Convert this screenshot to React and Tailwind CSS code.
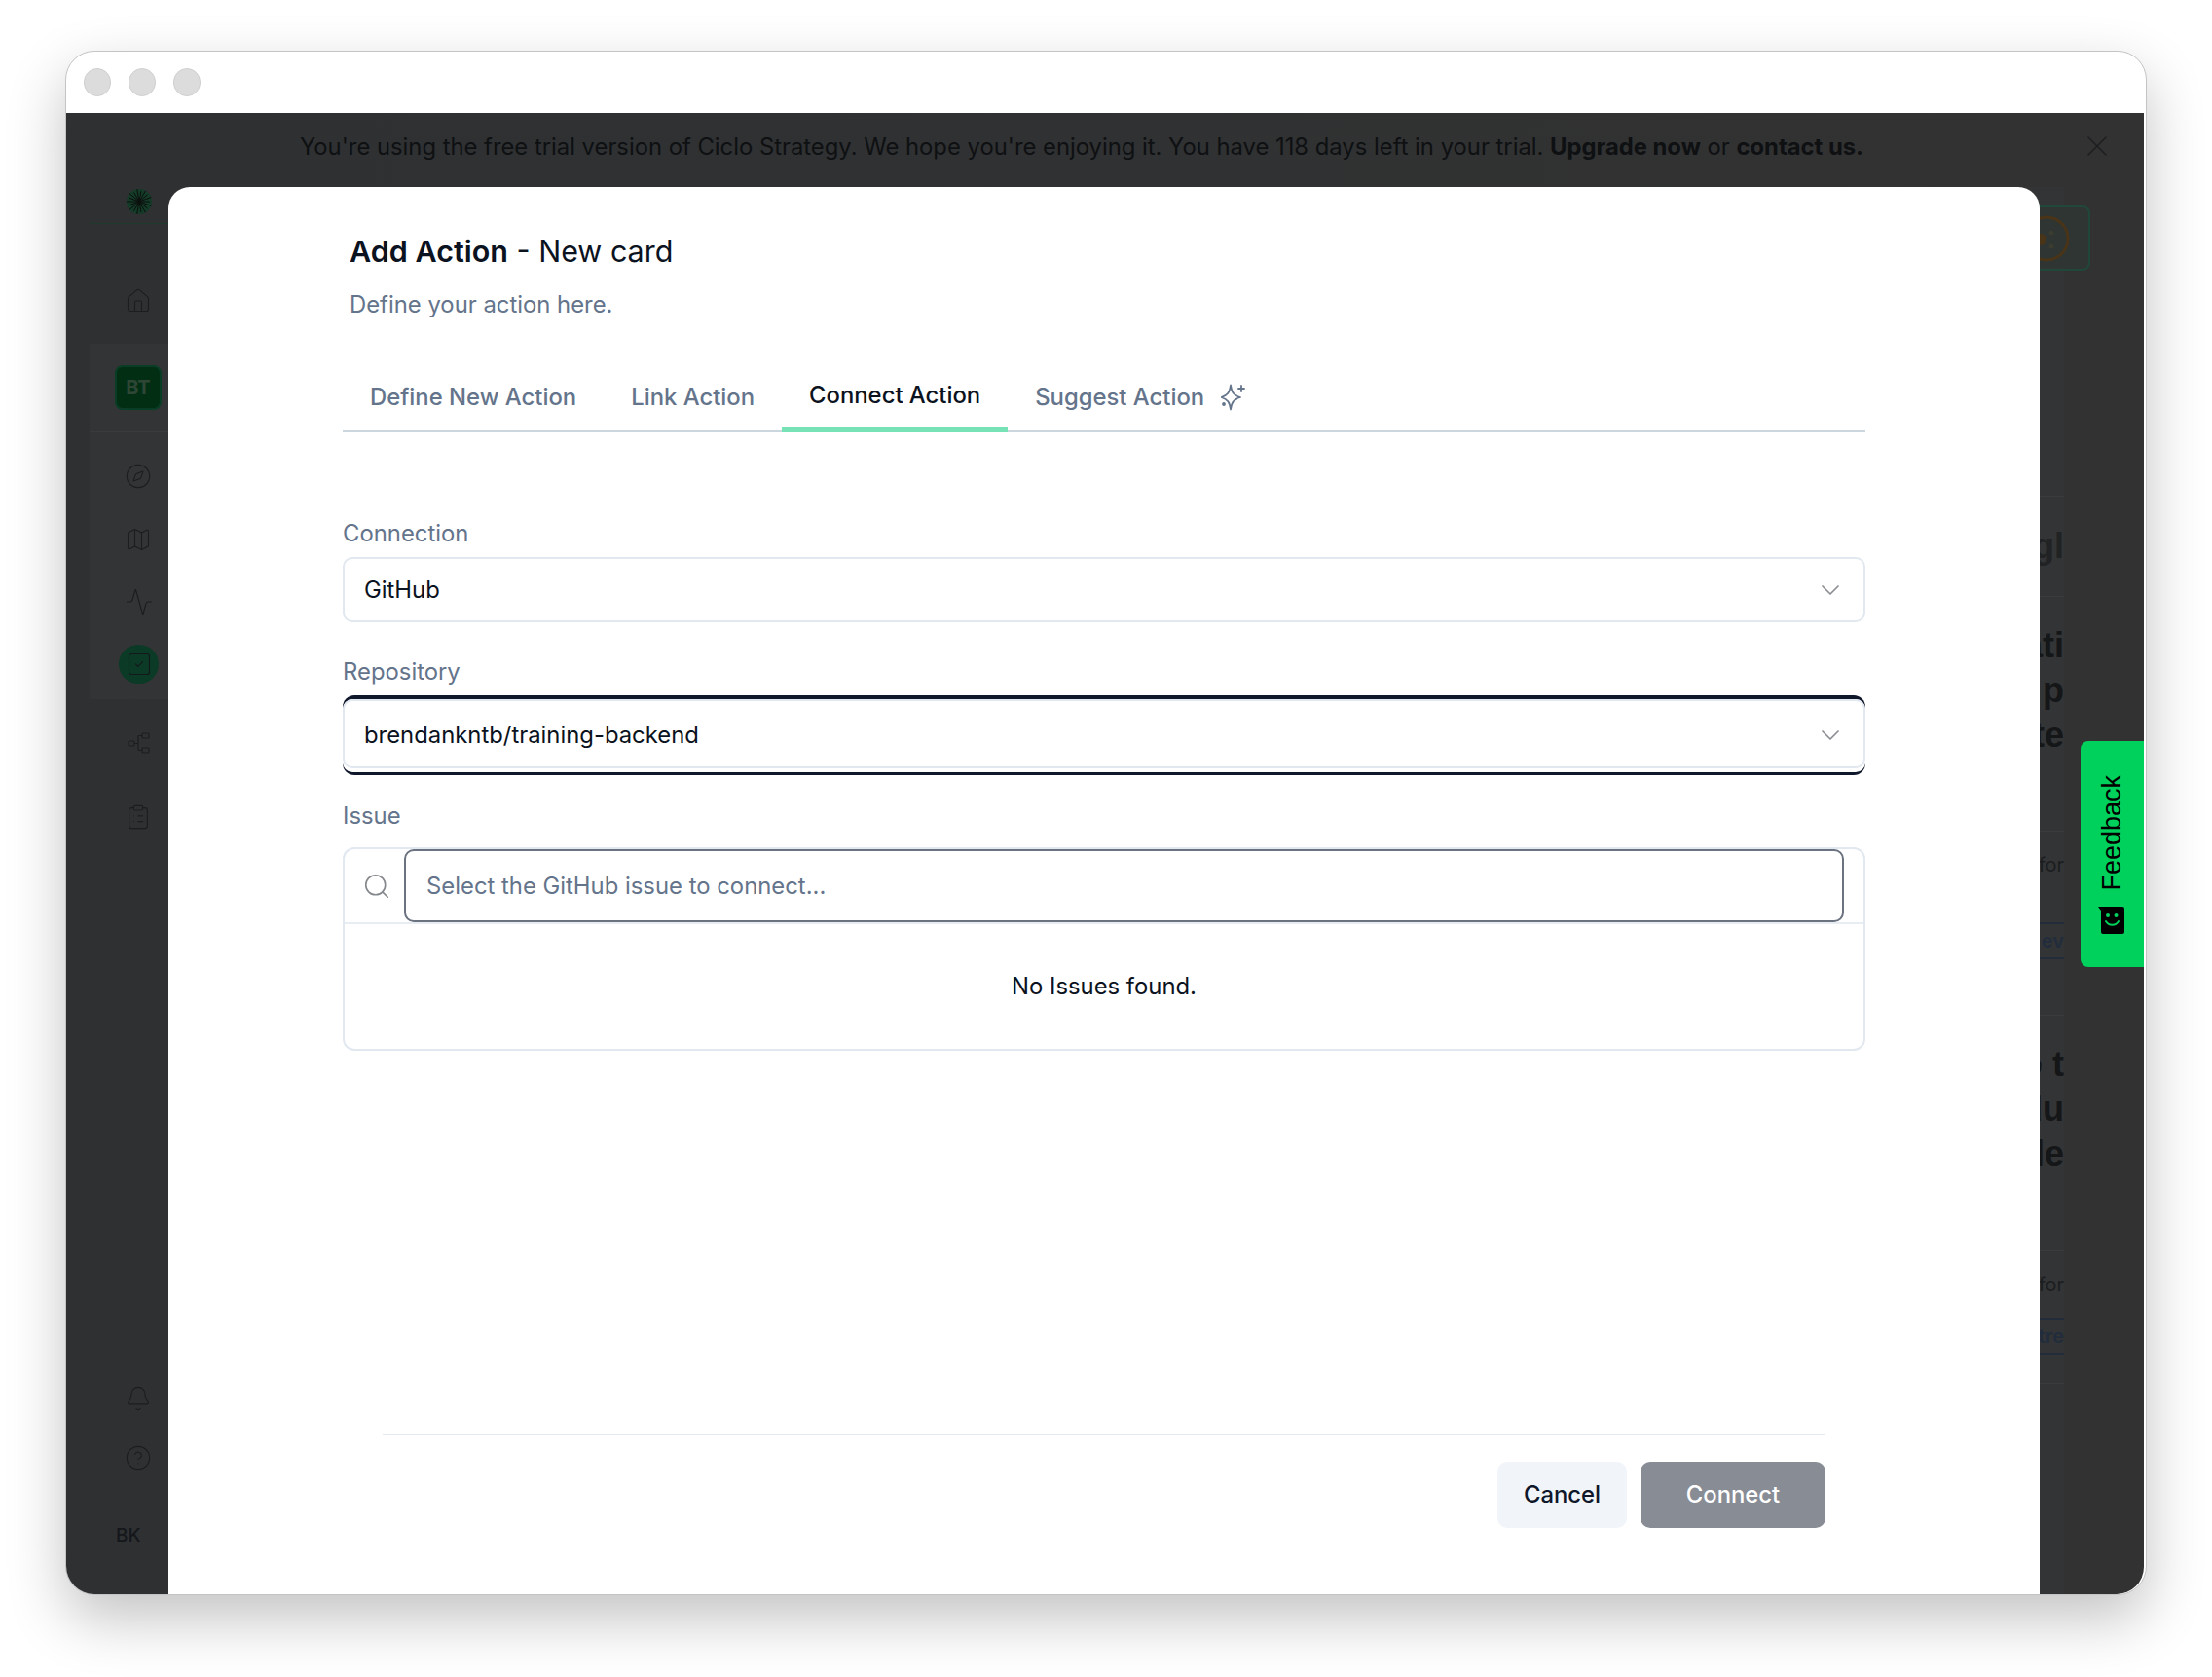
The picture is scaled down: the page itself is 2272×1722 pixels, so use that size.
import React from "react";
import { House, Compass, Map, Activity, SquareCheck, ClipboardList, Bell, CircleHelp, X, Search, ChevronDown } from "lucide-react";

function SparkIcon() {
  return (
    <svg width="28" height="28" viewBox="0 0 28 28" fill="none" stroke="#64748b" strokeWidth="1.8" strokeLinejoin="round" strokeLinecap="round">
      <path d="M10 1.5C11 9 13 12 20 14C13 16 11 19 10 26.5C9 19 7 16 0.5 14C7 12 9 9 10 1.5Z" />
      <path d="M21 2v6M18 5h6" />
      <circle cx="3" cy="21" r="1" fill="#64748b" />
    </svg>
  );
}

function Burst() {
  const spokes = Array.from({ length: 18 }, (_, i) => (i * Math.PI) / 9);
  return (
    <svg width="28" height="28" viewBox="-14 -14 28 28">
      <circle r="13" fill="#143a28" />
      {spokes.map((a, i) => (
        <line key={i} x1="0" y1="0" x2={Math.cos(a) * (i % 2 ? 13 : 11)} y2={Math.sin(a) * (i % 2 ? 13 : 11)} stroke="#0b0f0d" strokeWidth="1" />
      ))}
    </svg>
  );
}

function TreeIcon() {
  return (
    <svg width="24" height="24" viewBox="0 0 24 24" fill="none" stroke="#1b1d1f" strokeWidth="1.1">
      <rect x="1" y="10" width="6" height="5" rx="1" />
      <rect x="15" y="2" width="7" height="5" rx="1" />
      <rect x="15" y="17" width="7" height="5" rx="1" />
      <path d="M7 12.5h4M11 4.5v15M11 4.5h4M11 19.5h4" />
    </svg>
  );
}

function SmileBubble() {
  return (
    <svg width="27" height="28" viewBox="0 0 27 28">
      <path d="M0 0H25a2 2 0 0 1 2 2V26a2 2 0 0 1-2 2H5a2 2 0 0 1-2-2V4Z" fill="#000" />
      <circle cx="10" cy="9" r="2" fill="#00d05c" />
      <circle cx="18.5" cy="9" r="2" fill="#00d05c" />
      <path d="M8 15c3 5 10 5 13 0" fill="none" stroke="#00d05c" strokeWidth="2" strokeLinecap="round" />
    </svg>
  );
}

function Field({ label, children, className = "" }) {
  return (
    <div className={className}>
      <div className="text-[23.85px] leading-[32px] text-[#64748b]">{label}</div>
      {children}
    </div>
  );
}

function Select({ value, className }) {
  return (
    <div className={`flex items-center justify-between rounded-[10px] border-2 border-[#e2e8f0] bg-white pl-[20px] pr-[18px] text-[23.85px] text-[#0b1220] ${className}`}>
      <span>{value}</span>
      <ChevronDown size={32} strokeWidth={1.3} color="#8a8d92" />
    </div>
  );
}

function Peek({ lines, topPad, bottomPad, subTop, pillGap, pill, subPad }) {
  return (
    <div className="border-b border-[#3a3b3c]">
      <div className={`flex flex-col items-end ${topPad} ${bottomPad}`}>
        {lines.map((t) => (
          <div key={t} className="h-[46px] text-[36px] leading-[46px] font-bold text-[#141618] font-['Liberation_Sans',sans-serif]">{t}</div>
        ))}
      </div>
      <div className={`border-t border-[#3a3b3c] flex flex-col items-end ${subTop} ${subPad}`}>
        <div className="text-[20px] leading-[24px] text-[#1b1d1f]">for</div>
        <div className={`${pillGap} w-full border-y-2 border-[#222c3a] h-[38px] text-right text-[20px] leading-[34px] font-semibold text-[#212c3c]`}>{pill}</div>
      </div>
    </div>
  );
}

export default function App() {
  return (
    <div className="w-[2272px] h-[1722px] bg-white pl-[67px] pt-[52px] font-['Inter',sans-serif] overflow-hidden">
      <div className="w-[2138px] h-[1586px] rounded-[30px] bg-white border border-[#c4c4c4] shadow-[0_24px_60px_rgba(0,0,0,0.24)] flex flex-col overflow-hidden">
        <div className="h-[63px] shrink-0 flex items-center gap-[18px] pl-[18px]">
          <span className="w-[28px] h-[29px] rounded-full bg-[#dcdcdc] border border-[#cfcfcf]" />
          <span className="w-[28px] h-[29px] rounded-full bg-[#dcdcdc] border border-[#cfcfcf]" />
          <span className="w-[28px] h-[29px] rounded-full bg-[#dcdcdc] border border-[#cfcfcf]" />
        </div>

        <div className="relative flex-1 flex flex-col bg-gradient-to-r from-[#2e3032] to-[#323232] mr-[2px] rounded-br-[28px] overflow-hidden">
          {/* banner */}
          <div className="h-[76px] shrink-0 flex items-center justify-center relative text-[23.8px] text-[#0e1012] pr-[48px] pb-[6px]">
            <span>
              You're using the free trial version of Ciclo Strategy. We hope you're enjoying it. You have 118 days left in your trial.{" "}
              <b className="font-bold">Upgrade now</b> or <b className="font-bold">contact us.</b>
            </span>
            <X className="absolute right-[30px] top-[16px]" size={36} strokeWidth={1} color="#1c1e20" />
          </div>

          <div className="flex flex-1 min-h-0">
            {/* sidebar */}
            <div className="w-[105px] shrink-0 flex flex-col relative">
              <div className="ml-[24px] w-[81px] h-[38px] border-b border-[#1d3a2c] flex justify-center">
                <span className="ml-[20px] mt-[1px]"><Burst /></span>
              </div>
              <div className="ml-[60px] mt-[65px]"><House size={28} strokeWidth={0.95} color="#1b1d1f" /></div>
              <div className="ml-[24px] mt-[30px] bg-[#333435] flex flex-col">
                <div className="h-[91px] border-b border-[#3a3b3c] pl-[26px] pt-[22px]">
                  <div className="w-[48px] h-[46px] rounded-[8px] bg-[#022f14] border-2 border-[#0a3d26] flex items-center justify-center text-[20px] font-bold text-[#2e4636]">BT</div>
                </div>
                <div className="h-[274px] flex flex-col pl-[36px]">
                  <div className="mt-[31px]"><Compass size={28} strokeWidth={0.95} color="#1b1d1f" /></div>
                  <div className="mt-[37px]"><Map size={28} strokeWidth={0.95} color="#1b1d1f" /></div>
                  <div className="mt-[35px]"><Activity size={30} strokeWidth={0.9} color="#1b1d1f" /></div>
                  <div className="mt-[29px] -ml-[6px] w-[41px] h-[40px] rounded-full bg-[#0b3a26] flex items-center justify-center">
                    <SquareCheck size={28} strokeWidth={0.95} color="#15181a" />
                  </div>
                </div>
              </div>
              <div className="ml-[63px] mt-[33px]"><TreeIcon /></div>
              <div className="ml-[60px] mt-[50px]"><ClipboardList size={28} strokeWidth={0.95} color="#1b1d1f" /></div>
              <div className="mt-auto ml-[60px]"><Bell size={28} strokeWidth={0.95} color="#1b1d1f" /></div>
              <div className="ml-[60px] mt-[33px]"><CircleHelp size={28} strokeWidth={0.95} color="#1b1d1f" /></div>
              <div className="ml-[51px] mt-[58px] mb-[53px] text-[19px] leading-[15px] font-medium text-[#15171a]">BK</div>
            </div>

            {/* page behind the dialog */}
            <div className="flex-1 min-w-0 flex justify-end">
              <div className="w-[200px] shrink-0 mr-[82px] flex flex-col bg-[#333435]">
                <div className="h-[317px] shrink-0" />
                <div>
                  <div className="border-y border-[#3a3b3c] h-[104px] flex items-center justify-end text-[36px] font-bold text-[#202224] overflow-hidden font-['Liberation_Sans',sans-serif]">gl</div>
                  <Peek lines={["ati", "p", "te"]} topPad="pt-[27px]" bottomPad="pb-[75px]" subTop="pt-[22px]" subPad="pb-[29px]" pillGap="mt-[47px]" pill="ev" />
                  <div className="h-[28px] border-b border-[#3a3b3c]" />
                  <Peek lines={["o t", "du", "le"]} topPad="pt-[27px]" bottomPad="pb-[76px]" subTop="pt-[22px]" subPad="pb-[29px]" pillGap="mt-[22px]" pill="tre" />
                </div>
              </div>
            </div>
          </div>

          {/* top-right button, partly covered by the dialog */}
          <div className="absolute left-[1968px] top-[95px] w-[111px] h-[67px] rounded-[8px] border-2 border-[#20473a] bg-[#2f3533] flex items-center justify-end pr-[18px]">
            <svg width="50" height="50" viewBox="0 0 50 50">
              <circle cx="25" cy="25" r="22" fill="none" stroke="#4a3418" strokeWidth="3" />
              <circle cx="30" cy="19" r="2.5" fill="#3a3c30" />
              <circle cx="30" cy="33" r="2.5" fill="#3a3c30" />
              <circle cx="19" cy="26" r="6" fill="#4a3418" />
            </svg>
          </div>

          {/* feedback tab */}
          <div className="absolute right-0 top-[645px] w-[65px] h-[232px] rounded-l-[8px] bg-[#00d05c] flex flex-col items-center pt-[35px] pr-[2px] gap-[16px]">
            <span className="[writing-mode:vertical-rl] rotate-180 whitespace-nowrap text-[27px] leading-[30px] text-black font-['Liberation_Sans',sans-serif]">Feedback</span>
            <SmileBubble />
          </div>

          {/* modal */}
          <div className="absolute left-[105px] top-[76px] w-[1922px] bottom-0 bg-white rounded-t-[22px] flex flex-col text-[#0b1220]">
            <div className="px-[179px] flex flex-col flex-1">
              <div className="pl-[7px] pt-[44px] text-[30.5px] leading-[44px]">
                <span className="font-semibold">Add Action</span> - New card
              </div>
              <div className="pl-[7px] mt-[17px] text-[23.85px] leading-[32px] text-[#64748b]">Define your action here.</div>

              <div className="mt-[50px] flex items-stretch h-[65px] border-b-2 border-[#ccd6de] text-[23.85px] font-medium text-[#64748b]">
                <div className="px-[28px] flex items-center pb-[5px]">Define New Action</div>
                <div className="px-[28px] flex items-center pb-[5px]">Link Action</div>
                <div className="px-[28px] flex items-center pb-[5px] -mb-[2px] border-b-[6px] border-[#76e2b5] text-[#0b1220]">Connect Action</div>
                <div className="pl-[28px] flex items-center gap-[17px] pb-[5px]">Suggest Action <SparkIcon /></div>
              </div>

              <Field label="Connection" className="mt-[88px]">
                <div className="mt-[8px]"><Select value="GitHub" className="h-[67px]" /></div>
              </Field>

              <Field label="Repository" className="mt-[35px]">
                <div className="mt-[8px] bg-[#0f172a] rounded-[12px] pt-[4px] pb-[3px]">
                  <div className="bg-white rounded-[10px] pb-[4px]">
                    <Select value="brendankntb/training-backend" className="h-[71px] pt-[3px]" />
                  </div>
                </div>
              </Field>

              <Field label="Issue" className="mt-[26px]">
                <div className="mt-[16px] h-[209px] rounded-[12px] border-2 border-[#e2e8f0] flex flex-col">
                  <div className="h-[77px] shrink-0 border-b-2 border-[#e8edf3] flex items-center pl-[18px] pr-[20px]">
                    <Search size={30} strokeWidth={1.3} color="#85888c" />
                    <div className="ml-[13px] flex-1 h-[75px] rounded-[10px] border-2 border-[#6b7280] flex items-center pl-[21px] text-[23.85px] text-[#64748b]">
                      Select the GitHub issue to connect...
                    </div>
                  </div>
                  <div className="flex-1 flex items-center justify-center text-[23.85px] text-[#0b1220]">No Issues found.</div>
                </div>
              </Field>

              <div className="mt-auto mx-[41px] border-t-2 border-[#e2e8f0] pt-[27px] pb-[68px] flex justify-end gap-[14px] text-[23.85px]">
                <div className="w-[133px] h-[68px] rounded-[10px] bg-[#f1f5f9] flex items-center justify-center font-medium text-[#0f172a]">Cancel</div>
                <div className="w-[190px] h-[68px] rounded-[10px] bg-[#888c94] flex items-center justify-center font-medium text-white">Connect</div>
              </div>
            </div>
          </div>
        </div>
      </div>
    </div>
  );
}
